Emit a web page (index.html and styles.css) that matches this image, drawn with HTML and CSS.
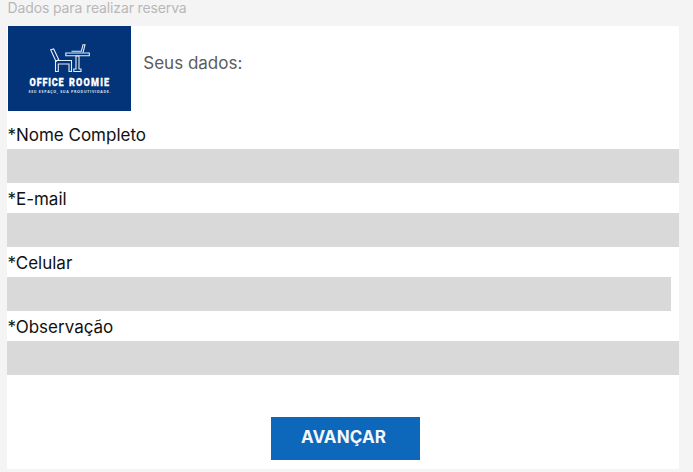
FILE: index.html
```html
<!DOCTYPE html>
<html lang="pt-BR">
<head>
<meta charset="utf-8">
<title>Office Roomie</title>
<link rel="stylesheet" href="styles.css">
</head>
<body>
<h1 class="title">Dados para realizar reserva</h1>
<main class="card">
  <header class="header">
    <svg class="logo" viewBox="0 0 123 85" role="img" aria-label="Office Roomie">
      <g class="logo-lines">
        <path d="M42.7 23.8 L45.7 23 L50.7 33.5 L48 35.5 Z"/>
        <path d="M47.5 34.5 H63.5 V45.5 H61 V38 H50.3 V45.5 H47.5 Z"/>
        <path d="M57.8 27 H81.3 V29.8 H57.8 Z"/>
        <path d="M63.5 25.3 H73.3 L75 18.8 H77 L75 26.5"/>
        <path d="M68 30 H71 V43 H73 V45.5 H65.8 V43 H68 Z"/>
      </g>
      <g transform="translate(21.6 0) scale(.78 1)">
        <text class="logo-name" x="0" y="59.8" textLength="43.5">OFFICE</text>
        <text class="logo-name" x="50.5" y="59.8" textLength="51.5">ROOMIE</text>
      </g>
      <text class="logo-tag" x="20.5" y="67.2" textLength="82">SEU ESPAÇO, SUA PRODUTIVIDADE.</text>
    </svg>
    <h2 class="subtitle">Seus dados:</h2>
  </header>
  <form class="form">
    <label class="label" for="nome">*Nome Completo</label>
    <input class="field" id="nome" type="text">
    <label class="label" for="email">*E-mail</label>
    <input class="field" id="email" type="email">
    <label class="label" for="celular">*Celular</label>
    <input class="field field-short" id="celular" type="tel">
    <label class="label" for="obs">*Observação</label>
    <input class="field" id="obs" type="text">
    <button class="submit" type="button">AVANÇAR</button>
  </form>
</main>
</body>
</html>
```
FILE: styles.css
```css
* {
  box-sizing: border-box;
}

body {
  margin: 0;
  height: 472px;
  overflow: hidden;
  background: #f4f4f4;
  font-family: Inter, "Liberation Sans", sans-serif;
}

.title {
  margin: 0;
  padding-left: 7.5px;
  height: 26px;
  font-size: 14px;
  font-weight: 400;
  line-height: 15px;
  letter-spacing: -0.13px;
  color: #b8b8b8;
}

.card {
  width: 672px;
  height: 443px;
  margin-left: 7.4px;
  background: #fff;
}

.header {
  display: flex;
  height: 93px;
}

.logo {
  width: 123px;
  height: 85px;
  margin-left: 0.4px;
  background: #033479;
}

.logo-lines {
  fill: none;
  stroke: #e6edf5;
  stroke-width: 1.1;
}

.logo-name {
  fill: #fff;
  stroke: #fff;
  stroke-width: 0.3;
  font: 900 11.6px Roboto, sans-serif;
}

.logo-tag {
  fill: #dbe4ef;
  font: 700 3.6px "Open Sans", sans-serif;
}

.subtitle {
  margin: 27px 0 0 12.5px;
  font-size: 17px;
  font-weight: 400;
  line-height: 21px;
  color: #5c5c5c;
}

.form {
  display: flex;
  flex-direction: column;
}

.label {
  height: 30px;
  padding-top: 6px;
  font-size: 17px;
  line-height: 21px;
  color: #111;
}

.field {
  width: 100%;
  height: 34px;
  border: 0;
  border-radius: 0;
  padding: 0 8px;
  background: #d9d9d9;
}

.field-short {
  width: 663.5px;
}

.submit {
  width: 149px;
  height: 43px;
  margin: 42px 0 0 263.6px;
  padding: 0 4px 3px 0;
  border: 0;
  background: #0d67ba;
  color: #f4f7fb;
  font: 700 17px Inter, sans-serif;
  letter-spacing: 0.1px;
}
```
